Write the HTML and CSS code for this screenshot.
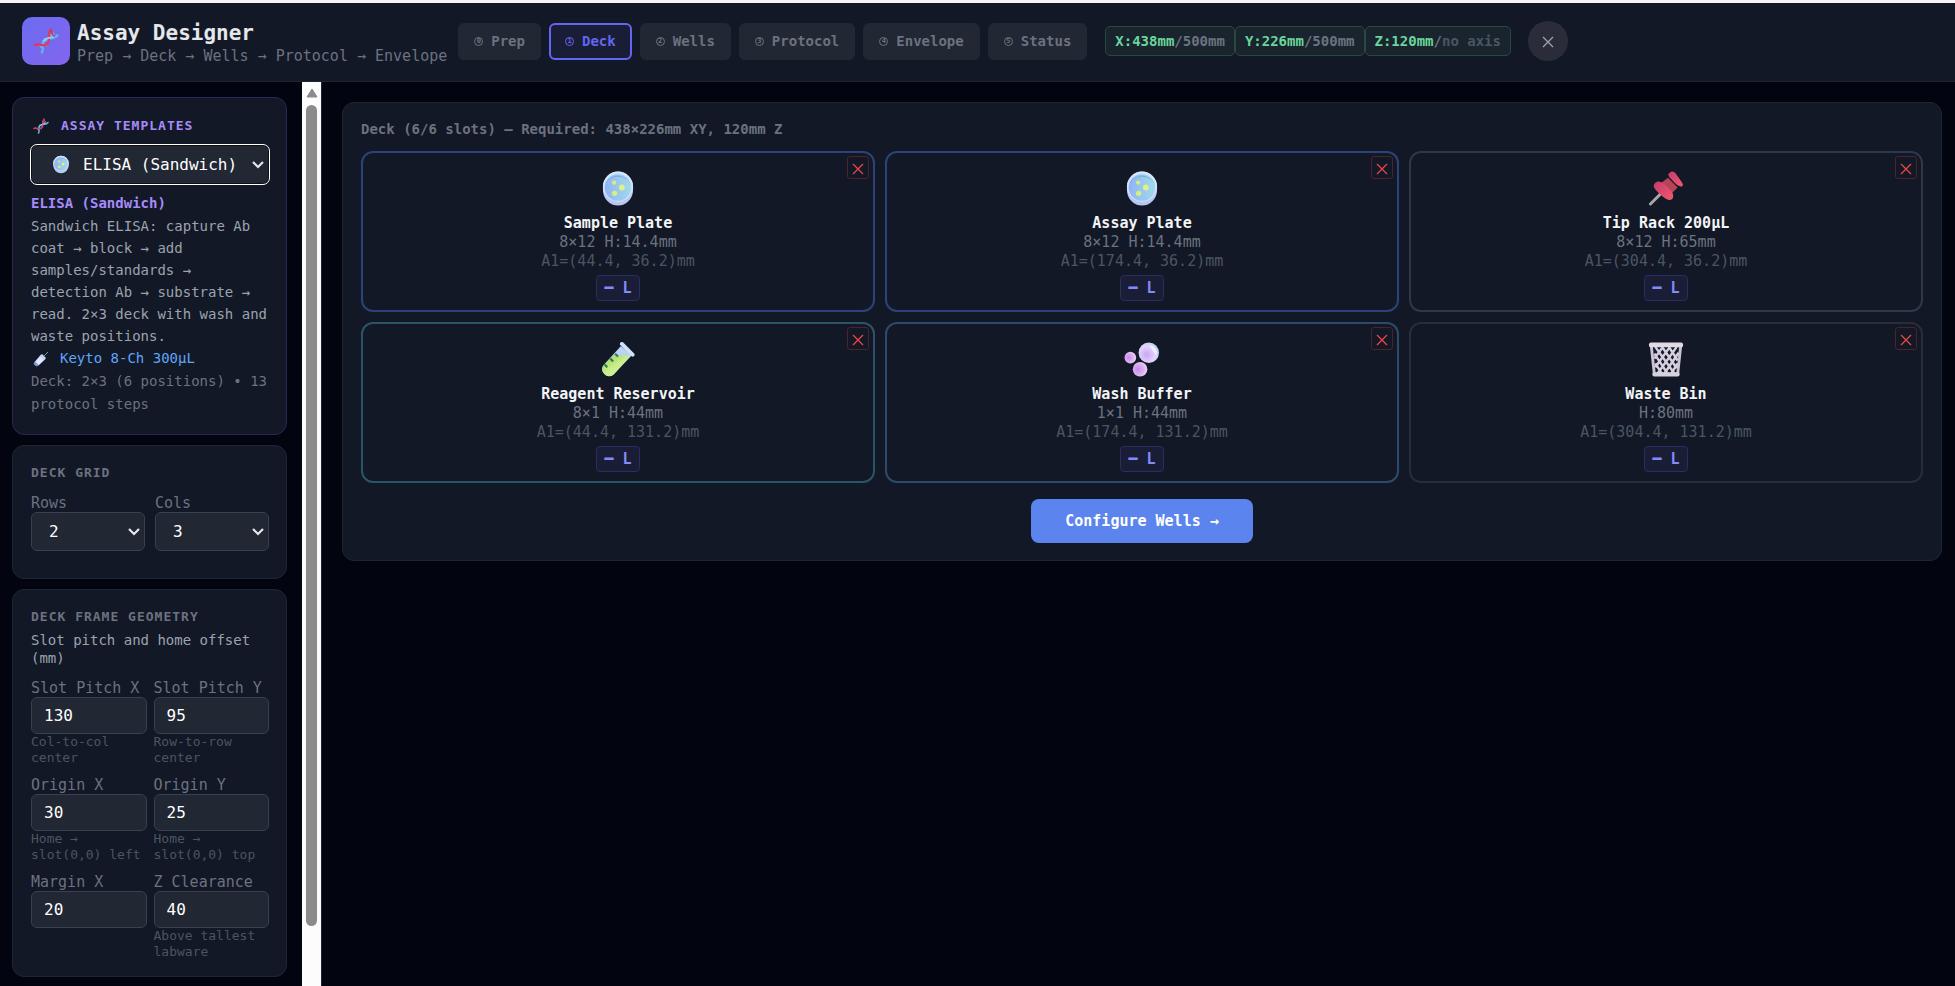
FILE: index.html
```html
<!DOCTYPE html>
<html lang="en">
<head>
  <meta charset="UTF-8" />
  <meta name="viewport" content="width=device-width, initial-scale=1.0"/>
  <title>Assay Designer</title>
  <link rel="stylesheet" href="styles.css">
</head>
<body>

  <!-- Icon definitions -->
  <svg class="defs" aria-hidden="true">
    <defs>
      <linearGradient id="gDish" x1="0" y1="0" x2="1" y2="0">
        <stop offset="0" stop-color="#8fb4f6"/><stop offset="1" stop-color="#a2d9ea"/>
      </linearGradient>
      <linearGradient id="gTube" x1="0" y1="0" x2="1" y2="1">
        <stop offset="0" stop-color="#9ccb52"/><stop offset="0.5" stop-color="#c9f08c"/><stop offset="1" stop-color="#d6ee84"/>
      </linearGradient>
      <linearGradient id="gPin" x1="0" y1="0" x2="1" y2="1">
        <stop offset="0" stop-color="#c73a6e"/><stop offset="1" stop-color="#f0596a"/>
      </linearGradient>
      <radialGradient id="gBubble" cx="0.4" cy="0.6" r="0.7">
        <stop offset="0" stop-color="#c9a4f6"/><stop offset="0.6" stop-color="#e3d3fb"/><stop offset="1" stop-color="#a8d5ee"/>
      </radialGradient>
      <radialGradient id="gBubble2" cx="0.35" cy="0.5" r="0.7">
        <stop offset="0" stop-color="#c98af0"/><stop offset="0.6" stop-color="#deb4f2"/><stop offset="1" stop-color="#f2dff0"/>
      </radialGradient>
    </defs>
    <symbol id="dna" viewBox="0 0 32 32">
      <g fill="none" stroke-linecap="round">
        <path d="M6 20l6 5M12 18l5 4M20 7l6 4M22 4l4 4M14 13l5 5" stroke="#8fb8e8" stroke-width="1.5"/>
        <path d="M11 30C14 25 10 20 13 16S27 14 30 9" stroke="#5db3ee" stroke-width="3"/>
        <path d="M2 21C7 18 12 24 17 20S17 8 22 2" stroke="#d93c5e" stroke-width="3"/>
        <path d="M22 3c2 2 1 5 4 7" stroke="#c73a5e" stroke-width="2"/>
        <path d="M13 16c3-4 7-4 11-5" stroke="#8fd0f5" stroke-width="2"/>
      </g>
    </symbol>
    <symbol id="dish" viewBox="0 0 32 36">
      <rect x="0.5" y="0.5" width="31" height="35" rx="15.5" ry="16" fill="#b9c6f3"/>
      <ellipse cx="16" cy="16" rx="15.5" ry="15.5" fill="#d2e4fb"/>
      <ellipse cx="16" cy="17" rx="13.7" ry="13.7" fill="url(#gDish)"/>
      <path d="M3 14a13.7 13.7 0 0 1 26 0A14 13 0 0 0 3 14z" fill="#7fb1d6"/>
      <circle cx="12" cy="12" r="2.2" fill="#d6ee7c"/>
      <circle cx="20" cy="17" r="3" fill="#e0f183"/>
      <circle cx="12.5" cy="23" r="2.8" fill="#d6ee7c"/>
    </symbol>
    <symbol id="syringe" viewBox="0 0 32 32">
      <path d="M21 11l9-9" stroke="#8d92a8" stroke-width="2"/>
      <path d="M18 6l8 8-2 3-13 12-8-7L15 8z" fill="#c4d2f5"/>
      <path d="M15 12l6 6-9 9-6-6z" fill="#dfe7fc"/>
      <path d="M3 22l8 7-4 2-6-5z" fill="#7ea1d8"/>
    </symbol>
    <symbol id="tube" viewBox="0 0 36 36">
      <path d="M21 4l11 10-18 19c-3 3-7 3-10 0s-3-7 0-10z" fill="#b7d3f5"/>
      <path d="M13 14h18L14 33c-3 3-7 3-10 0s-3-7 0-10z" fill="url(#gTube)"/>
      <path d="M15 12l3 3M10 17l3 3M4 23l3 3" stroke="#39755d" stroke-width="2.2"/>
      <path d="M22 2L33 13" stroke="#cfe2fa" stroke-width="4" stroke-linecap="round"/>
    </symbol>
    <symbol id="pin" viewBox="0 0 36 36">
      <path d="M2 34L14 22" stroke="#a9a5ae" stroke-width="3" stroke-linecap="round"/>
      <path d="M20 7l10 10-7 7-11-11z" fill="#b34459"/>
      <path d="M23 1c2-1 4 0 6 3l5 7c2 3 2 5-1 5-3-1-6-3-9-7-4-4-5-6-1-8z" fill="url(#gPin)"/>
      <path d="M7 12c4-3 8 0 12 4s8 8 6 12c-3 4-8 1-13-4S3 16 7 12z" fill="url(#gPin)"/>
    </symbol>
    <symbol id="bubbles" viewBox="0 0 36 36">
      <circle cx="25" cy="11" r="10.5" fill="url(#gBubble)"/>
      <path d="M26 3c6 1 8 6 7 11-2-4-6-6-7-11z" fill="#f2ecfd"/>
      <circle cx="6" cy="16" r="6" fill="url(#gBubble2)"/>
      <circle cx="16" cy="28" r="7.5" fill="url(#gBubble2)"/>
    </symbol>
    <symbol id="bin" viewBox="0 0 36 36">
      <path d="M3 5l3 28h24l3-28" fill="#151a27" stroke="#c9c3d4" stroke-width="3"/>
      <path d="M7 5l20 28M14 5l15 22M21 5l9 14M6 12l14 21M7 22l7 11M29 5L9 33M22 5L7 26M15 5L6 17M31 11L16 33M30 22l-7 11" stroke="#d5cfe0" stroke-width="2.6"/>
      <rect x="0.5" y="0.5" width="35" height="5" rx="2" fill="#dedbe2"/>
      <rect x="4" y="31" width="28" height="4.5" rx="2" fill="#d6d2dd"/>
    </symbol>
    <symbol id="cross" viewBox="0 0 12 12">
      <path d="M1 1l10 10M11 1L1 11" fill="none" stroke="currentColor" stroke-width="1.3"/>
    </symbol>
    <symbol id="chevron" viewBox="0 0 12 8">
      <path d="M1 1l5 5 5-5" fill="none" stroke="#e5e7eb" stroke-width="2.2"/>
    </symbol>
  </svg>

  <header class="header">
    <div class="brand">
      <div class="logo"><svg><use href="#dna"/></svg></div>
      <div class="brand-text">
        <h1>Assay Designer</h1>
        <p class="subtitle">Prep → Deck → Wells → Protocol → Envelope</p>
      </div>
    </div>
    <nav class="tabs">
      <button class="tab"><span class="num">0</span> Prep</button>
      <button class="tab active"><span class="num">1</span> Deck</button>
      <button class="tab"><span class="num">2</span> Wells</button>
      <button class="tab"><span class="num">3</span> Protocol</button>
      <button class="tab"><span class="num">4</span> Envelope</button>
      <button class="tab"><span class="num">5</span> Status</button>
    </nav>
    <div class="axes">
      <span class="axis">X:438mm<span class="limit">/500mm</span></span>
      <span class="axis">Y:226mm<span class="limit">/500mm</span></span>
      <span class="axis">Z:120mm<span class="limit">/<span class="none">no axis</span></span></span>
    </div>
    <button class="close" aria-label="Close"><svg><use href="#cross"/></svg></button>
  </header>

  <div class="layout">
    <aside class="sidebar">
      <section class="card template-card">
        <h2><svg class="emoji"><use href="#dna"/></svg><label for="template">Assay Templates</label></h2>
        <div class="select-wrap focused">
          <svg class="select-icon"><use href="#dish"/></svg>
          <select id="template">
            <option>ELISA (Sandwich)</option>
          </select>
          <svg class="chevron"><use href="#chevron"/></svg>
        </div>
        <div class="template-info">
          <strong>ELISA (Sandwich)</strong>
          <p>Sandwich ELISA: capture Ab coat → block → add samples/standards → detection Ab → substrate → read. 2×3 deck with wash and waste positions.</p>
          <div class="pipette"><svg class="emoji"><use href="#syringe"/></svg>Keyto 8-Ch 300µL</div>
          <div class="meta">Deck: 2×3 (6 positions) • 13 protocol steps</div>
        </div>
      </section>

      <section class="card grid-card">
        <h2>Deck Grid</h2>
        <div class="grid-fields">
          <div class="field">
            <label for="rows">Rows</label>
            <div class="select-wrap">
              <select id="rows"><option>2</option></select>
              <svg class="chevron"><use href="#chevron"/></svg>
            </div>
          </div>
          <div class="field">
            <label for="cols">Cols</label>
            <div class="select-wrap">
              <select id="cols"><option>3</option></select>
              <svg class="chevron"><use href="#chevron"/></svg>
            </div>
          </div>
        </div>
      </section>

      <section class="card">
        <h2>Deck Frame Geometry</h2>
        <p class="card-note">Slot pitch and home offset (mm)</p>
        <div class="geometry">
          <div class="field">
            <label for="pitchX">Slot Pitch X</label>
            <input type="text" id="pitchX" value="130" />
            <small>Col-to-col center</small>
          </div>
          <div class="field">
            <label for="pitchY">Slot Pitch Y</label>
            <input type="text" id="pitchY" value="95" />
            <small>Row-to-row center</small>
          </div>
          <div class="field">
            <label for="originX">Origin X</label>
            <input type="text" id="originX" value="30" />
            <small>Home → slot(0,0) left</small>
          </div>
          <div class="field">
            <label for="originY">Origin Y</label>
            <input type="text" id="originY" value="25" />
            <small>Home → slot(0,0) top</small>
          </div>
          <div class="field">
            <label for="marginX">Margin X</label>
            <input type="text" id="marginX" value="20" />
          </div>
          <div class="field">
            <label for="clearance">Z Clearance</label>
            <input type="text" id="clearance" value="40" />
            <small>Above tallest labware</small>
          </div>
        </div>
      </section>
    </aside>

    <div class="scrollbar" aria-hidden="true">
      <svg class="scroll-arrow" viewBox="0 0 12 10"><path d="M6 1l5 8H1z" fill="#8b8b8b" stroke="#8b8b8b" stroke-linejoin="round"/></svg>
      <div class="thumb"></div>
    </div>

    <main class="main">
      <section class="deck">
        <h2>Deck (6/6 slots) — Required: 438×226mm XY, 120mm Z</h2>
        <div class="slots">
          <div class="slot plate">
            <button class="remove" aria-label="Remove Sample Plate"><svg><use href="#cross"/></svg></button>
            <svg class="slot-icon"><use href="#dish"/></svg>
            <h3>Sample Plate</h3>
            <p>8×12 H:14.4mm</p>
            <p class="origin">A1=(44.4, 36.2)mm</p>
            <button class="orient">━ L</button>
          </div>
          <div class="slot plate">
            <button class="remove" aria-label="Remove Assay Plate"><svg><use href="#cross"/></svg></button>
            <svg class="slot-icon"><use href="#dish"/></svg>
            <h3>Assay Plate</h3>
            <p>8×12 H:14.4mm</p>
            <p class="origin">A1=(174.4, 36.2)mm</p>
            <button class="orient">━ L</button>
          </div>
          <div class="slot tips">
            <button class="remove" aria-label="Remove Tip Rack"><svg><use href="#cross"/></svg></button>
            <svg class="slot-icon"><use href="#pin"/></svg>
            <h3>Tip Rack 200µL</h3>
            <p>8×12 H:65mm</p>
            <p class="origin">A1=(304.4, 36.2)mm</p>
            <button class="orient">━ L</button>
          </div>
          <div class="slot reservoir">
            <button class="remove" aria-label="Remove Reagent Reservoir"><svg><use href="#cross"/></svg></button>
            <svg class="slot-icon"><use href="#tube"/></svg>
            <h3>Reagent Reservoir</h3>
            <p>8×1 H:44mm</p>
            <p class="origin">A1=(44.4, 131.2)mm</p>
            <button class="orient">━ L</button>
          </div>
          <div class="slot wash">
            <button class="remove" aria-label="Remove Wash Buffer"><svg><use href="#cross"/></svg></button>
            <svg class="slot-icon"><use href="#bubbles"/></svg>
            <h3>Wash Buffer</h3>
            <p>1×1 H:44mm</p>
            <p class="origin">A1=(174.4, 131.2)mm</p>
            <button class="orient">━ L</button>
          </div>
          <div class="slot waste">
            <button class="remove" aria-label="Remove Waste Bin"><svg><use href="#cross"/></svg></button>
            <svg class="slot-icon"><use href="#bin"/></svg>
            <h3>Waste Bin</h3>
            <p>H:80mm</p>
            <p class="origin">A1=(304.4, 131.2)mm</p>
            <button class="orient">━ L</button>
          </div>
        </div>
        <button class="configure">Configure Wells →</button>
      </section>
    </main>
  </div>

</body>
</html>
```

FILE: styles.css
```css
* {
  box-sizing: border-box;
}
body {
  margin: 0;
  height: 100vh;
  display: flex;
  flex-direction: column;
  overflow: hidden;
  background-color: #02040f;
  color: #e5e7eb;
  font-family: "DejaVu Sans Mono", "Liberation Mono", monospace;
  font-size: 14px;
  line-height: 18px;
  border-top: 3px solid #f5f5f5;
}
h1, h2, h3, p {
  margin: 0;
}
button, input, select {
  font-family: inherit;
}
button {
  cursor: pointer;
}
.defs {
  position: absolute;
  width: 0;
  height: 0;
}

/* Header */
.header {
  display: flex;
  align-items: center;
  flex-shrink: 0;
  height: 79px;
  padding: 0 22px 2px;
  background-color: #121826;
  border-bottom: 1px solid #1f2633;
}
.brand {
  display: flex;
  align-items: center;
  gap: 7px;
  margin-right: 11px;
}
.brand-text {
  padding-top: 4px;
}
.logo {
  display: flex;
  align-items: center;
  justify-content: center;
  width: 48px;
  height: 48px;
  border-radius: 10px;
  background: linear-gradient(135deg, #6b6cf0, #8465ee);
}
.logo svg {
  width: 26px;
  height: 26px;
}
h1 {
  font-size: 21px;
  line-height: 26px;
}
.subtitle {
  font-size: 15px;
  line-height: 20px;
  color: #6b7280;
}
.tabs {
  display: flex;
  gap: 8px;
  margin-right: 18px;
}
.tab {
  display: flex;
  align-items: center;
  gap: 8px;
  height: 37px;
  padding: 0 14px;
  border: 2px solid transparent;
  border-radius: 6px;
  background-color: #212733;
  color: #6b7280;
  font-size: 14px;
  font-weight: bold;
}
.tab.active {
  border-color: #6366f1;
  background-color: #1a1d36;
  color: #6366f1;
}
.num {
  width: 9px;
  height: 9px;
  border: 1px solid currentColor;
  border-radius: 50%;
  font-size: 7px;
  line-height: 7px;
  text-align: center;
}
.axes {
  display: flex;
  margin-right: 17px;
}
.axis {
  padding: 5px 9px;
  border: 1px solid #28493f;
  border-radius: 5px;
  background-color: #19242e;
  color: #6ad69a;
  font-weight: bold;
}
.limit {
  color: #6b7280;
}
.none {
  color: #4b5563;
}
.close {
  display: flex;
  align-items: center;
  justify-content: center;
  width: 40px;
  height: 40px;
  padding: 2px 0 0;
  border: none;
  border-radius: 50%;
  background-color: #2a2d39;
  color: #9ca3af;
}
.close svg {
  width: 12px;
  height: 12px;
}

/* Sidebar */
.layout {
  display: flex;
  flex: 1;
  min-height: 0;
}
.sidebar {
  display: flex;
  flex-direction: column;
  gap: 10px;
  flex: 0 0 302px;
  padding: 15px 15px 0 12px;
}
.card {
  padding: 18px 17px 16px 18px;
  border: 1px solid #1f2633;
  border-radius: 12px;
  background-color: #121826;
}
.card h2 {
  font-size: 13px;
  line-height: 18px;
  letter-spacing: 1px;
  text-transform: uppercase;
  color: #6b7280;
}
.template-card {
  padding-bottom: 18px;
  border-color: #2b2750;
}
.template-card h2 {
  display: flex;
  align-items: center;
  margin-bottom: 9px;
  line-height: 20px;
  color: #a78bfa;
}
.emoji {
  width: 16px;
  height: 16px;
  margin: 0 12px 0 2px;
}
.select-wrap {
  position: relative;
}
select {
  appearance: none;
  display: block;
  width: 100%;
  height: 39px;
  padding: 0 17px;
  border: 1px solid #374151;
  border-radius: 6px;
  background-color: #212733;
  color: #ffffff;
  font-size: 16px;
}
.focused select {
  padding-left: 51px;
  padding-right: 20px;
  border: 1px solid #101010;
  outline: 1px solid #ffffff;
}
.select-icon {
  position: absolute;
  left: 22px;
  top: 10px;
  width: 16px;
  height: 19px;
}
.chevron {
  position: absolute;
  right: 5px;
  top: 16px;
  width: 12px;
  height: 8px;
}
.template-info {
  margin-top: 8px;
  line-height: 23px;
}
.template-info strong {
  color: #a78bfa;
}
.template-info p {
  line-height: 22px;
  color: #9ca3af;
}
.pipette {
  display: flex;
  align-items: center;
  color: #60a5fa;
}
.pipette .emoji {
  margin-right: 11px;
}
.meta {
  color: #6b7280;
}
.grid-card {
  padding-bottom: 27px;
}
.grid-fields {
  display: grid;
  grid-template-columns: 1fr 1fr;
  gap: 10px;
  margin-top: 12px;
}
.field label {
  display: block;
  font-size: 15px;
  line-height: 18px;
  color: #6b7280;
}
.card-note {
  margin: 5px 0 12px;
  color: #9ca3af;
}
.geometry {
  display: grid;
  grid-template-columns: 1fr 1fr;
  gap: 10px 7px;
}
input {
  display: block;
  width: 100%;
  height: 37px;
  padding: 0 12px;
  border: 1px solid #374151;
  border-radius: 6px;
  background-color: #212733;
  color: #ffffff;
  font-size: 16px;
}
.field small {
  display: block;
  font-size: 13px;
  line-height: 16px;
  color: #4b5563;
}
.scrollbar {
  display: flex;
  flex-direction: column;
  align-items: center;
  gap: 7px;
  flex: 0 0 19px;
  padding: 6px 0 60px;
  background-color: #fcfcfc;
}
.scroll-arrow {
  width: 12px;
  height: 10px;
}
.thumb {
  flex: 1;
  width: 11px;
  border-radius: 6px;
  background-color: #8b8b8b;
}

/* Deck */
.main {
  flex: 1;
  padding: 20px 13px 20px 20px;
  border-left: 1px solid #1f2633;
}
.deck {
  padding: 17px 18px;
  border: 1px solid #1f2633;
  border-radius: 12px;
  background-color: #121826;
}
.deck h2 {
  margin-bottom: 13px;
  font-size: 14px;
  line-height: 18px;
  color: #6b7280;
}
.slots {
  display: grid;
  grid-template-columns: repeat(3, 1fr);
  gap: 10px;
}
.slot {
  position: relative;
  display: flex;
  flex-direction: column;
  align-items: center;
  padding: 18px 10px 9px;
  border: 2px solid #374151;
  border-radius: 12px;
  font-size: 15px;
  line-height: 19px;
  color: #6b7280;
}
.slot-icon {
  width: 36px;
  height: 35px;
  margin-bottom: 7px;
}
.slot h3 {
  font-size: 15px;
  line-height: 20px;
  color: #f3f4f6;
}
.origin {
  color: #4b5563;
}
.plate {
  border-color: #2d4278;
}
.tips {
  border-color: #30374a;
}
.reservoir {
  border-color: #2c5468;
}
.wash {
  border-color: #2c4b6b;
}
.waste {
  border-color: #272d3b;
}
.remove {
  position: absolute;
  top: 3px;
  right: 4px;
  display: flex;
  align-items: center;
  justify-content: center;
  width: 22px;
  height: 23px;
  padding: 2px 0 0;
  border: 1px solid #4a232d;
  border-radius: 3px;
  background-color: transparent;
  color: #ef4444;
}
.remove svg {
  width: 12px;
  height: 12px;
}
.orient {
  margin-top: 4px;
  height: 26px;
  padding: 0 7px;
  border: 1px solid #2d2d61;
  border-radius: 4px;
  background-color: #1a1d36;
  color: #818cf8;
  font-size: 15px;
  font-weight: bold;
}
.configure {
  display: block;
  height: 44px;
  margin: 16px auto 0;
  padding: 0 34px;
  border: none;
  border-radius: 8px;
  background-color: #5b84ee;
  color: #ffffff;
  font-size: 15px;
  font-weight: bold;
}
```
